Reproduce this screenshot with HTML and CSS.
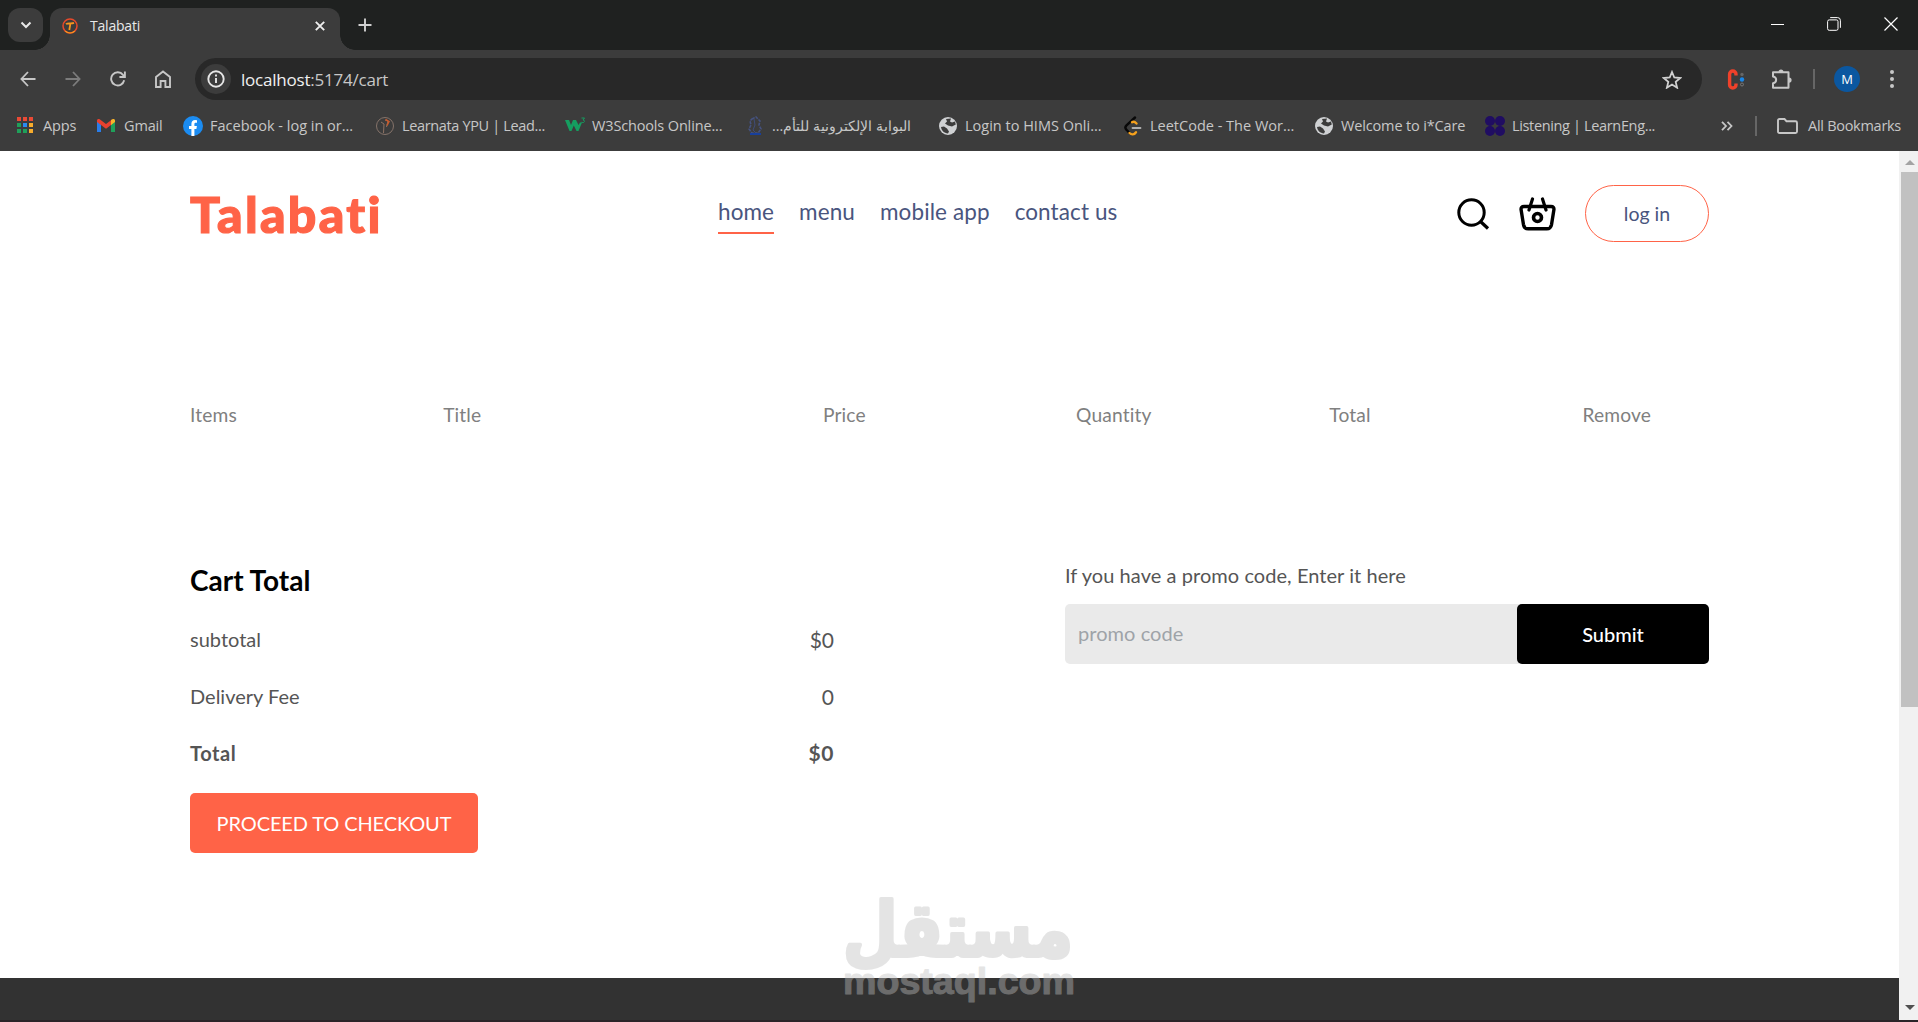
FILE: index.html
```html
<!DOCTYPE html>
<html lang="en">
<head>
    <meta charset="UTF-8">
    <meta name="viewport" content="width=device-width, initial-scale=1.0">
    <title>Talabati</title>
    <link rel="stylesheet" href="styles.css">
</head>
<body>
    <!-- Browser window -->
    <div class="tab-strip">
        <div class="tab-search">
            <svg width="12" height="8" viewBox="0 0 12 8"><path d="M1.500 1.500L6 6l4.500-4.500" fill="none" stroke="#e8e8e8" stroke-width="2"/></svg>
        </div>
        <div class="tab">
            <svg width="16" height="16" viewBox="0 0 16 16" fill="none"><circle cx="8" cy="8" r="7" stroke="#e8492b" stroke-width="1.5"/><path d="M4 6.2c2-1.800 5-.2 8-1.400M8.400 5.600L7.300 12" stroke="#f7941d" stroke-width="1.8"/><path d="M3.200 13c3 2.600 7 2.400 9.600 0" stroke="#f7941d" stroke-width="1.3"/></svg>
            <span class="tab-title">Talabati</span>
            <svg class="tab-close" width="10" height="10" viewBox="0 0 10 10"><path d="M.8.8l8.400 8.400M9.200.8L.8 9.200" stroke="#eee" stroke-width="1.9"/></svg>
        </div>
        <svg class="new-tab" width="14" height="14" viewBox="0 0 14 14"><path d="M7 .5v13M.5 7h13" stroke="#d0d0d0" stroke-width="1.9"/></svg>
        <div class="window-buttons">
            <svg width="13" height="13" viewBox="0 0 13 13"><path d="M0 6.500h13" stroke="#fff"/></svg>
            <svg width="14" height="14" viewBox="0 0 14 14" fill="none" stroke="#fff"><rect x=".6" y="2.9" width="10.4" height="10.4" rx="1.6"/><path d="M3.200.6h7.400a2.800 2.800 0 0 1 2.800 2.800v7.400"/></svg>
            <svg width="14" height="14" viewBox="0 0 14 14"><path d="M.5.5l13 13M13.500.5l-13 13" stroke="#fff" stroke-width="1.2"/></svg>
        </div>
    </div>

    <div class="toolbar">
        <div class="nav-icons">
            <svg width="16" height="16" viewBox="0 0 16 16"><path d="M8 1L1.400 8 8 15M1.400 8H15.500" fill="none" stroke="#c7c7c7" stroke-width="1.8"/></svg>
            <svg width="16" height="16" viewBox="0 0 16 16"><path d="M8 1l6.600 7L8 15M14.600 8H.5" fill="none" stroke="#7c7c7c" stroke-width="1.8"/></svg>
            <svg width="16" height="16" viewBox="0 0 16 16"><path d="M14.200 9.300A6.600 6.600 0 1 1 13 3.800l1.600 1.800M14.900.4v5.600H9.400" fill="none" stroke="#c7c7c7" stroke-width="1.9"/></svg>
            <svg width="16" height="18" viewBox="0 0 16 18"><path d="M1 7L8 1.400 15 7v10h-4.600v-6H5.600v6H1z" fill="none" stroke="#c7c7c7" stroke-width="1.9"/></svg>
        </div>
        <div class="address-bar">
            <div class="site-info">
                <svg width="18" height="18" viewBox="0 0 18 18"><circle cx="9" cy="9" r="7.7" fill="none" stroke="#e6e6e6" stroke-width="1.9"/><path d="M9 8v5M9 4.600v1.900" stroke="#e6e6e6" stroke-width="1.9"/></svg>
            </div>
            <span class="url"><b>localhost</b>:5174/cart</span>
            <svg class="star" width="20" height="19" viewBox="0 0 20 19"><path d="M10 2l2.300 5.500 5.900.5-4.500 3.900 1.400 5.800-5.100-3.100-5.100 3.100 1.400-5.800L1.800 8l5.900-.5z" fill="none" stroke="#d0d0d0" stroke-width="1.8"/></svg>
        </div>
        <svg class="ext-c" width="19" height="21" viewBox="0 0 19 21"><path d="M10 6.500V5.200a3.200 3.200 0 0 0-6.400 0v10.600a3.200 3.200 0 0 0 6.400 0v-1.300" fill="none" stroke="#f0412a" stroke-width="3.400"/><circle cx="16" cy="5.500" r="1.700" fill="#666"/><circle cx="16" cy="10.500" r="2.200" fill="#1a87e8"/><circle cx="16" cy="15.500" r="1.500" fill="none" stroke="#777"/></svg>
        <svg class="ext-puzzle" width="22" height="21" viewBox="0 0 22 21"><path d="M2 3.200h15.500v15.600H2v-4.600c4.200-.6 4.200-6.200 0-6.800z" fill="none" stroke="#c7c7c7" stroke-width="2" stroke-linejoin="round"/><path d="M7.500 3a2.500 2.500 0 0 1 5 0zM18 8.500a2.600 2.600 0 0 1 0 5.200z" fill="#c7c7c7"/></svg>
        <i class="divider"></i>
        <div class="avatar">M</div>
        <svg class="dots" width="4" height="18" viewBox="0 0 4 18" fill="#c7c7c7"><circle cx="2" cy="2" r="2"/><circle cx="2" cy="9" r="2"/><circle cx="2" cy="16" r="2"/></svg>
    </div>

    <div class="bookmarks">
        <div class="bookmark"><svg width="20" height="20" viewBox="0 0 20 20"><path d="M1 1h4v4H1zM7 1h4v4H7zM13 1h4v4h-4z" fill="#ea4a35"/><path d="M1 7h4v4H1zM1 13h4v4H1zM7 13h4v4H7z" fill="#1fa05a"/><path d="M7 7h4v4H7z" fill="#2a8af0"/><path d="M13 7h4v4h-4zM13 13h4v4h-4z" fill="#f7ac2c"/></svg><span class="snug">Apps</span></div>
        <div class="bookmark"><svg width="20" height="20" viewBox="0 0 20 20"><path d="M0 5v11h4V8z" fill="#2a7de9"/><path d="M14 8v8h4V5z" fill="#1fa05a"/><path d="M0 6V4.500C0 3 1.500 2.500 3 3.400L9 8l6-4.600v4.800L9 12.800z" fill="#e8412f"/><path d="M14 4l1-.6c1.500-.9 3-.4 3 1.100V6l-4 3z" fill="#f7b32a"/></svg><span class="snug">Gmail</span></div>
        <div class="bookmark"><svg width="20" height="20" viewBox="0 0 20 20"><circle cx="10" cy="10" r="10" fill="#1b8cf2"/><path d="M8.400 20v-7H6v-3h2.400V8c0-2.600 1.500-3.900 3.700-3.900l1.900.2v2.500h-1.200c-1.100 0-1.400.6-1.400 1.400V10h2.500l-.5 3h-2v7z" fill="#fff"/></svg><span>Facebook - log in or...</span></div>
        <div class="bookmark"><svg width="20" height="20" viewBox="0 0 20 20" fill="none"><circle cx="10" cy="10" r="8.500" stroke="#85736a"/><path d="M6 6l3 2-.5 9M10 4l3 1-1.500 6" stroke="#8d7264"/><path d="M10.500 3.500l3.500 2-2 4" stroke="#c95a2b" stroke-width="1.500"/></svg><span class="tight">Learnata YPU | Lead...</span></div>
        <div class="bookmark"><svg width="20" height="20" viewBox="0 0 20 20"><path d="M0 4h4l2 5 2-5h3l2.500 5L15 6.500h2L13.500 15h-2L8.800 9.500 6.500 15h-2z" fill="#159e60"/><path d="M16.500 2h3l-1.500 2c2 0 2 2.600-.2 2.600l-1.300-.3" fill="none" stroke="#159e60"/></svg><span class="snug">W3Schools Online...</span></div>
        <div class="bookmark"><svg width="20" height="20" viewBox="0 0 20 20" fill="none"><path d="M7 3l4-2 4 4-1 4 2 4-3 4H7l-3-4 2-4-1-4z" stroke="#45527f" stroke-width="1.6" stroke-dasharray="3 1"/><path d="M9 3l1 6-2 5 3 3" stroke="#3f4c78"/><path d="M5 18h11" stroke="#173f9c" stroke-width="2"/></svg><span class="arabic" dir="rtl">البوابة الإلكترونية للتأم...</span></div>
        <div class="bookmark"><svg width="20" height="20" viewBox="0 0 20 20"><circle cx="10" cy="10" r="9" fill="#cfd1d3"/><path d="M3 11l3-.5 3 2 2 3-1 2c-4-.4-6.500-3-7-6.500zM8 3l5-.5-1 3 2 1 3-1 .8 3-3.800 2-4-1-3-2 2-2z" fill="#3c3c3c"/></svg><span>Login to HIMS Onli...</span></div>
        <div class="bookmark"><svg width="20" height="20" viewBox="0 0 20 20" fill="none" stroke-width="2.400" stroke-linecap="round"><path d="M12 1.500L3.500 9.300c-1.500 1.500-1.500 3 0 4.500l3 3.200" stroke="#080808"/><path d="M9 6.200c1.500-1 2.700-.7 4.500 1.300M6.500 17c2 2 4.500 2 6.500-.8" stroke="#f5a11d"/><path d="M9.500 12h8" stroke="#b0b0b0" stroke-width="1.800"/></svg><span>LeetCode - The Wor...</span></div>
        <div class="bookmark"><svg width="20" height="20" viewBox="0 0 20 20"><circle cx="10" cy="10" r="9" fill="#cfd1d3"/><path d="M3 11l3-.5 3 2 2 3-1 2c-4-.4-6.500-3-7-6.500zM8 3l5-.5-1 3 2 1 3-1 .8 3-3.800 2-4-1-3-2 2-2z" fill="#3c3c3c"/></svg><span class="snug">Welcome to i*Care</span></div>
        <div class="bookmark"><svg width="20" height="20" viewBox="0 0 20 20" fill="#200d62"><circle cx="5" cy="5" r="5"/><circle cx="15" cy="5" r="5"/><circle cx="5" cy="15" r="5"/><circle cx="15" cy="15" r="5"/></svg><span class="tight">Listening | LearnEng...</span></div>
        <div class="bookmarks-end">
            <svg width="12" height="10" viewBox="0 0 12 10"><path d="M1 .8L5 5 1 9.200M6.500.8l4 4.200-4 4.200" fill="none" stroke="#c7c7c7" stroke-width="1.800"/></svg>
            <i class="divider"></i>
            <svg width="21" height="16" viewBox="0 0 21 16"><path d="M1 2.500C1 1.500 1.500 1 2.500 1h5l2 2.200h9c1 0 1.500.5 1.500 1.500v8.800c0 1-.5 1.500-1.500 1.500h-16C1.500 15 1 14.500 1 13.500z" fill="none" stroke="#c7c7c7" stroke-width="1.900"/></svg>
            <span>All Bookmarks</span>
        </div>
    </div>

    <!-- Page -->
    <div class="viewport">
        <div class="page">
            <div class="app">
                <header class="navbar">
                    <div class="logo">Talabati</div>
                    <ul class="navbar-menu">
                        <li class="active">home</li>
                        <li>menu</li>
                        <li>mobile app</li>
                        <li>contact us</li>
                    </ul>
                    <div class="navbar-right">
                        <svg width="33" height="32" viewBox="0 0 33 32" fill="none" stroke="#000"><circle cx="14.500" cy="14.500" r="12.700" stroke-width="3"/><path d="M23.500 23.500l7.500 7" stroke-width="3.200"/></svg>
                        <svg width="37" height="34" viewBox="0 0 37 34" fill="none" stroke="#000" stroke-linecap="round" stroke-linejoin="round"><path d="M5 9.500h27c2.200 0 3.200 1.200 2.900 3.200l-2.400 15c-.5 2.700-2 4.100-4.700 4.100H9.200c-2.700 0-4.200-1.400-4.700-4.100l-2.400-15C1.800 10.700 2.800 9.500 5 9.500z" stroke-width="3.400"/><path d="M13.500 2l-3.500 11M23.500 2L27 13" stroke-width="3.200"/><circle cx="18.500" cy="20.500" r="4" stroke-width="3.600"/></svg>
                        <button>log in</button>
                    </div>
                </header>

                <div class="cart-items-title">
                    <p>Items</p>
                    <p>Title</p>
                    <p>Price</p>
                    <p>Quantity</p>
                    <p>Total</p>
                    <p>Remove</p>
                </div>

                <div class="cart-bottom">
                    <div class="cart-total">
                        <h2>Cart Total</h2>
                        <div class="cart-total-details"><p>subtotal</p><p class="amount">$0</p></div>
                        <div class="cart-total-details"><p>Delivery Fee</p><p class="amount">0</p></div>
                        <div class="cart-total-details bold"><p>Total</p><p class="amount">$0</p></div>
                        <button class="checkout">PROCEED TO CHECKOUT</button>
                    </div>
                    <div class="cart-promocode">
                        <p>If you have a promo code, Enter it here</p>
                        <div class="promo-input">
                            <span class="placeholder">promo code</span>
                            <button class="submit">Submit</button>
                        </div>
                    </div>
                </div>
            </div>
            <footer class="footer"></footer>
        </div>
        <div class="scrollbar">
            <i class="arrow up"></i>
            <div class="thumb"></div>
            <i class="arrow down"></i>
        </div>
    </div>

    <!-- Watermark -->
    <svg class="watermark" width="240" height="130" viewBox="0 0 240 130">
        <text class="wm-ar" x="119" y="66" text-anchor="middle" direction="rtl" textLength="230" lengthAdjust="spacingAndGlyphs">مستقل</text>
        <text class="wm-en" x="4" y="104" textLength="232" lengthAdjust="spacingAndGlyphs">mostaql.com</text>
    </svg>
</body>
</html>
```

FILE: styles.css
```css
* {
    box-sizing: border-box;
    margin: 0;
    padding: 0;
}

body {
    width: 1918px;
    height: 1022px;
    overflow: hidden;
    background: #3c3c3c;
    font-family: "Open Sans", "Noto Sans", sans-serif;
    font-size: 14.5px;
    color: #c7c7c7;
}

svg {
    display: block;
    flex: none;
}

/* Tabs */
.tab-strip {
    display: flex;
    align-items: flex-start;
    height: 50px;
    padding: 8px 8px 0;
    background: #1f2120;
}

.tab-search {
    display: flex;
    align-items: center;
    justify-content: center;
    width: 35px;
    height: 34px;
    border-radius: 12px;
    background: #3c3c3c;
}

.tab {
    position: relative;
    display: flex;
    align-items: center;
    width: 290px;
    height: 42px;
    margin-left: 7px;
    padding: 0 15px 7px 12px;
    border-radius: 12px 12px 0 0;
    background: #3c3c3c;
    color: #e8e8e8;
    z-index: 1;
}

/* Curved feet of the active tab */
.tab::before,
.tab::after {
    content: '';
    position: absolute;
    bottom: 0;
    width: 15px;
    height: 15px;
}

.tab::before {
    left: -15px;
    background: radial-gradient(circle at 0 0, transparent 14.5px, #3c3c3c 15px);
}

.tab::after {
    right: -15px;
    background: radial-gradient(circle at 100% 0, transparent 14.5px, #3c3c3c 15px);
}

.tab-title {
    margin-left: 12px;
    padding-bottom: 1px;
    font-size: 14px;
    letter-spacing: -0.2px;
    white-space: nowrap;
}

.tab-close {
    margin-left: auto;
}

.new-tab {
    margin: 10px 0 0 18px;
}

.window-buttons {
    display: flex;
    align-items: center;
    gap: 43px;
    margin: 9px 12px 0 auto;
}

/* Address row */
.toolbar {
    display: flex;
    align-items: center;
    height: 58px;
    padding: 0 24px 0 20px;
}

.nav-icons {
    display: flex;
    align-items: center;
    gap: 29px;
    width: 175px;
}

.address-bar {
    display: flex;
    align-items: center;
    width: 1507px;
    height: 42px;
    padding: 0 20px 0 6px;
    border-radius: 21px;
    background: #282828;
}

.site-info {
    display: flex;
    align-items: center;
    justify-content: center;
    width: 30px;
    height: 30px;
    border-radius: 50%;
    background: #3c3c3c;
}

.url {
    margin-left: 10px;
    font-size: 17px;
    letter-spacing: -0.22px;
}

.url b {
    font-weight: 400;
    color: #f0f0f0;
}

.star {
    margin-left: auto;
}

.ext-c {
    margin-left: 24px;
}

.ext-puzzle {
    margin-left: 26px;
}

.divider {
    width: 2px;
    height: 20px;
    background: #666;
}

.toolbar .divider {
    margin-left: 20px;
}

.avatar {
    width: 26px;
    height: 26px;
    margin-left: 19px;
    border-radius: 50%;
    background: #0b57a0;
    color: #fff;
    font-size: 13px;
    line-height: 26px;
    text-align: center;
}

.dots {
    margin-left: auto;
}

/* Bookmarks */
.bookmarks {
    display: grid;
    grid-template-columns: 81px 86px 192px 190px 180px 193px 185px 191px 171px 1fr auto;
    align-items: center;
    height: 43px;
    padding: 0 17px 7px 16px;
    white-space: nowrap;
}

.bookmark {
    display: flex;
    align-items: center;
    gap: 7px;
}

.bookmarks span {
    padding-bottom: 2px;
}

.snug {
    letter-spacing: -0.15px;
}

.tight {
    letter-spacing: -0.35px;
}

.bookmarks .arabic {
    font-size: 14.2px;
}

.bookmarks-end {
    display: flex;
    align-items: center;
}

.bookmarks-end .divider {
    margin: 0 20px 0 22px;
}

.bookmarks-end span {
    margin-left: 10px;
    letter-spacing: -0.28px;
}

/* Page */
.viewport {
    display: flex;
    height: 871px;
    background: #fff;
    border-bottom: 2px solid #2a2428;
}

.page {
    display: flex;
    flex-direction: column;
    width: 1899px;
    font-family: Lato, sans-serif;
}

.app {
    height: 827px;
    padding: 34px 190px 0;
}

.navbar {
    display: flex;
    align-items: flex-start;
    height: 57px;
    color: #49557e;
}

.logo {
    width: 528px;
    margin-top: -1px;
    color: tomato;
    font-size: 50px;
    font-weight: 900;
    font-variant-ligatures: none;
    letter-spacing: 2.3px;
    line-height: 60px;
    -webkit-text-stroke: 1.2px tomato;
}

.navbar-menu {
    display: flex;
    gap: 25px;
    margin-top: 9px;
    list-style: none;
    font-size: 22.5px;
    letter-spacing: 0.1px;
}

.navbar-menu li {
    height: 40px;
    line-height: 35px;
}

.navbar-menu .active {
    border-bottom: 2px solid tomato;
}

.navbar-right {
    display: flex;
    align-items: center;
    gap: 29px;
    height: 57px;
    margin-left: auto;
}

.navbar-right button {
    width: 124px;
    height: 57px;
    border: 1px solid tomato;
    border-radius: 29px;
    background: transparent;
    color: #49557e;
    font: 19.5px Lato, sans-serif;
}

/* Cart */
.cart-items-title {
    display: grid;
    grid-template-columns: 1fr 1.5fr 1fr 1fr 1fr 0.5fr;
    margin-top: 161px;
    color: grey;
    font-size: 19.2px;
    letter-spacing: 0.15px;
    line-height: 24px;
}

.cart-bottom {
    display: flex;
    justify-content: space-between;
    margin-top: 136px;
    color: #555;
    font-size: 20px;
}

.cart-total {
    width: 644px;
}

.cart-total h2 {
    margin-bottom: 29px;
    color: #000;
    font-size: 28px;
    font-weight: 700;
    line-height: 35px;
}

.cart-total-details {
    display: flex;
    justify-content: space-between;
    height: 57px;
    line-height: 25px;
}

.amount {
    font-size: 21px;
}

.cart-total-details.bold {
    height: 52px;
    font-weight: 700;
    letter-spacing: 0.6px;
    line-height: 24px;
}

.checkout {
    width: 288px;
    height: 60px;
    padding-bottom: 1px;
    border: none;
    border-radius: 5px;
    background: tomato;
    color: #fff;
    font: 20px Lato, sans-serif;
    letter-spacing: -0.12px;
}

.cart-promocode {
    width: 644px;
    letter-spacing: 0.06px;
    line-height: 25px;
}

.promo-input {
    display: flex;
    align-items: center;
    justify-content: space-between;
    height: 60px;
    margin-top: 16px;
    padding-left: 13px;
    border-radius: 5px;
    background: #eaeaea;
}

.placeholder {
    padding-bottom: 1px;
    color: #9ea3a8;
}

.submit {
    width: 192px;
    height: 60px;
    padding-bottom: 1px;
    border: none;
    border-radius: 5px;
    background: #000;
    color: #fff;
    font: 500 20px Lato, sans-serif;
}

.footer {
    flex: 1;
    background: #323232;
}

/* Scrollbar */
.scrollbar {
    display: flex;
    flex-direction: column;
    align-items: center;
    width: 19px;
    padding: 9px 0 10px 2px;
    background: #f1f1f1;
}

.thumb {
    width: 17px;
    height: 535px;
    margin-top: 7px;
    background: #c1c1c1;
}

.arrow {
    border: 5px solid transparent;
}

.up {
    border-top: none;
    border-bottom-color: #a3a3a3;
}

.down {
    margin-top: auto;
    border-bottom: none;
    border-top-color: #505050;
}

/* Watermark over the page */
.watermark {
    position: absolute;
    left: 839px;
    top: 890px;
    fill: #c0c0c0;
    stroke: #c0c0c0;
    stroke-linejoin: round;
    opacity: 0.41;
}

.wm-ar {
    font: 700 75px "DejaVu Sans", sans-serif;
    stroke-width: 4px;
}

.wm-en {
    font: 700 36px "Liberation Sans", sans-serif;
    stroke-width: 1px;
}
```
